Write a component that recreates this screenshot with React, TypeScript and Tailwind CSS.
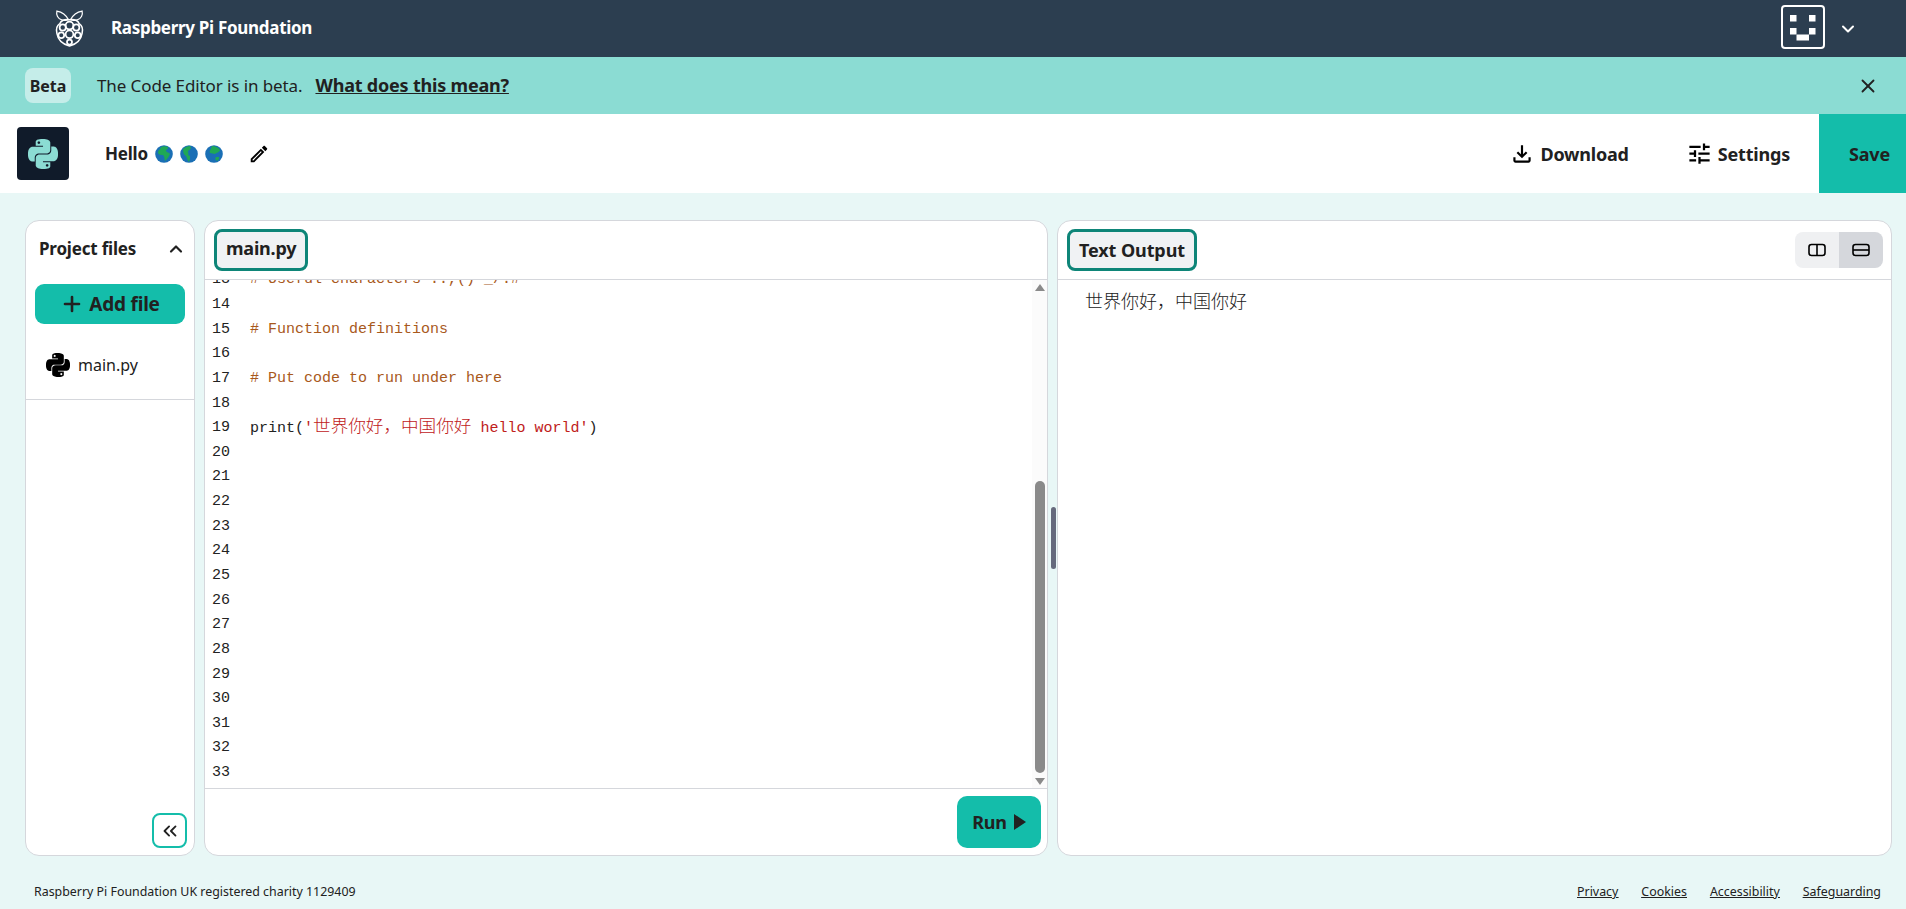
import { ChevronDown, ChevronUp, ChevronsLeft, Plus, X } from "lucide-react";
import { SiPython } from "react-icons/si";

function RaspberryLogo() {
  return (
    <svg viewBox="0 0 32 40" className="w-[31px] h-[39px]" fill="none" stroke="white" strokeWidth="1.3">
      {/* leaves */}
      <path d="M15 11C13 7 9 3 3 2c-1 4 1 8 5 9 3 1 5 1 7 0z" />
      <path d="M17 11c2-4 6-8 12-9 1 4-1 8-5 9-3 1-5 1-7 0z" />
      {/* berry */}
      <path d="M16 11c5-1 9 1 10 4 3 2 4 6 3 10-1 6-5 11-13 13-8-2-12-7-13-13-1-4 0-8 3-10 1-3 5-5 10-4z" strokeWidth="1.6" />
      <circle cx="16" cy="17" r="4" strokeWidth="1.8" />
      <circle cx="9" cy="19" r="3.2" strokeWidth="1.8" />
      <circle cx="23" cy="19" r="3.2" strokeWidth="1.8" />
      <circle cx="16" cy="26" r="4" strokeWidth="1.8" />
      <circle cx="7.5" cy="27" r="3" strokeWidth="1.8" />
      <circle cx="24.5" cy="27" r="3" strokeWidth="1.8" />
      <circle cx="16" cy="34" r="2.6" strokeWidth="1.8" />
    </svg>
  );
}

function Avatar() {
  return (
    <svg viewBox="0 0 44 44" className="w-11 h-11 mb-[3px]">
      <rect x="1" y="1" width="42" height="42" rx="3" fill="none" stroke="white" strokeWidth="2" />
      <rect x="9" y="10" width="6.5" height="6.5" fill="white" />
      <rect x="28" y="10" width="6.5" height="6.5" fill="white" />
      <rect x="9" y="23" width="6.5" height="6.5" fill="white" />
      <rect x="28" y="23" width="6.5" height="6.5" fill="white" />
      <rect x="15.5" y="29.5" width="12.5" height="6" fill="white" />
    </svg>
  );
}

function Globe({ land }: { land: string }) {
  return (
    <svg viewBox="0 0 18 18" className="w-[18px] h-[18px]">
      <circle cx="9" cy="9" r="8.8" fill="#1a6fb5" />
      <path d={land} fill="#1fa855" />
    </svg>
  );
}

function PencilIcon() {
  return (
    <svg viewBox="0 0 24 24" className="w-[22px] h-[22px]" fill="black">
      <path d="M14.06 9.02l.92.92L5.92 19H5v-.92l9.06-9.06M17.66 3c-.25 0-.51.1-.7.29l-1.83 1.83 3.75 3.75 1.83-1.83c.39-.39.39-1.02 0-1.41l-2.34-2.34c-.2-.2-.45-.29-.71-.29zm-3.6 3.19L3 17.25V21h3.75L17.81 9.94l-3.75-3.75z" />
    </svg>
  );
}

function DownloadIcon() {
  return (
    <svg viewBox="0 0 24 24" className="w-[26px] h-[26px]" fill="black">
      <path d="M18 15v3H6v-3H4v3c0 1.1.9 2 2 2h12c1.1 0 2-.9 2-2v-3h-2zm-1-4l-1.41-1.41L13 12.17V4h-2v8.17L8.41 9.59 7 11l5 5 5-5z" />
    </svg>
  );
}

function TuneIcon() {
  return (
    <svg viewBox="0 0 24 24" className="w-[27px] h-[27px]" fill="black">
      <path d="M3 17v2h6v-2H3zM3 5v2h10V5H3zm10 16v-2h8v-2h-8v-2h-2v6h2zM7 9v2H3v2h4v2h2V9H7zm14 4v-2H11v2h10zm-6-4h2V7h4V5h-4V3h-2v6z" />
    </svg>
  );
}

const lineNumbers = Array.from({ length: 21 }, (_, i) => i + 13);

function CodeLine({ n }: { n: number }) {
  let code: React.ReactNode = null;
  if (n === 13) code = <span className="text-[#a8591c]"># Useful characters :.,()*_/.#</span>;
  if (n === 15) code = <span className="text-[#a8591c]"># Function definitions</span>;
  if (n === 17) code = <span className="text-[#a8591c]"># Put code to run under here</span>;
  if (n === 19)
    code = (
      <div className="-mt-[3px]">
        <span className="text-[#222]">print(</span>
        <span className="text-[#c0201a]">
          '<span className="font-['Noto_Sans_CJK_SC',sans-serif] text-[17.6px] font-light">世界你好，中国你好</span> hello world'
        </span>
        <span className="text-[#222]">)</span>
      </div>
    );
  return (
    <div className="flex h-[24.65px] items-center whitespace-pre">
      <div className="w-[38px] text-[#222]">{n}</div>
      <div>{code}</div>
    </div>
  );
}

export default function App() {
  return (
    <div className="h-screen flex flex-col bg-[#e8f7f6] text-[#212121] font-['Noto_Sans','Noto_Sans_CJK_SC',sans-serif] overflow-hidden">
      {/* Global nav */}
      <header className="h-[57px] shrink-0 bg-[#2c3e50] flex items-center text-white">
        <div className="ml-[54px] w-[57px]">
          <RaspberryLogo />
        </div>
        <span className="text-[17px] font-bold tracking-[-0.3px] pb-[2px]">Raspberry Pi Foundation</span>
        <div className="ml-auto flex items-center">
          <Avatar />
          <ChevronDown className="w-5 h-5 ml-[13px] mr-[48px]" strokeWidth={2.4} />
        </div>
      </header>

      {/* Beta banner */}
      <div className="h-[57px] shrink-0 bg-[#8bdcd3] flex items-center pl-[25px] pr-[27px]">
        <span className="w-[46px] h-[35px] rounded-lg bg-[#c5ede9] flex items-center justify-center text-[16px] font-bold">Beta</span>
        <span className="ml-[26px] text-[17px] tracking-[-0.1px]">The Code Editor is in beta.</span>
        <a className="ml-[13px] text-[18px] font-bold underline tracking-[-0.2px]" href="#">What does this mean?</a>
        <X className="ml-auto w-[22px] h-[22px]" strokeWidth={2} />
      </div>

      {/* Project bar */}
      <div className="h-[79px] shrink-0 bg-white flex items-center pl-[17px]">
        <div className="w-[52px] h-[53px] rounded bg-[#101b2a] flex items-center justify-center">
          <SiPython className="w-[30px] h-[30px] text-[#8bdcd3]" />
        </div>
        <div className="ml-[36px] pt-[1px] flex items-center gap-[7px] text-[17px] font-bold tracking-[-0.2px]">
          <span>Hello</span>
          <Globe land="M6 2c2-1 5-1 7 0 1 2-2 2-2 4 1 2 3 1 4 3-1 3-3 5-5 7-1-2 0-4-2-6-2 0-4 0-5-2 0-3 2-3 3-6z" />
          <Globe land="M3 4c2-2 5-3 7-3 2 2 0 4-2 5 0 2 1 3 0 4l2 1 0 3-1 3c-2-2-2-4-3-6-2-1-3-3-3-7z" />
          <Globe land="M7 1c3 0 6 1 8 4-1 3-3 2-5 4-2 0-3-1-5-1C4 6 6 4 7 1zm4 11l3 0 0 2-2 2-2-2z" />
        </div>
        <div className="ml-[25px]">
          <PencilIcon />
        </div>
        <div className="ml-auto flex items-center h-full text-[18px] font-bold tracking-[-0.2px]">
          <DownloadIcon />
          <span className="ml-[5px] pt-[1px]">Download</span>
          <div className="ml-[57px]">
            <TuneIcon />
          </div>
          <span className="ml-[5px] mr-[29px] pt-[1px]">Settings</span>
          <button className="w-[87px] h-full bg-[#14bdaa] pl-[30px] pt-[1px] text-left font-bold">Save</button>
        </div>
      </div>

      {/* Editor panels */}
      <main className="flex-1 min-h-0 flex gap-[9px] pl-[25px] pr-[14px] pt-[27px]">
        {/* Sidebar */}
        <aside className="relative w-[170px] shrink-0 bg-white rounded-[14px] border border-[#d5d7dc] flex flex-col">
          <div className="flex items-center justify-between h-[54px] pl-[13px] pr-[8px] pt-[2px]">
            <span className="text-[17px] font-bold tracking-[-0.2px]">Project files</span>
            <ChevronUp className="w-5 h-5" strokeWidth={2.6} />
          </div>
          <button className="mx-[9px] mt-[9px] h-[40px] rounded-[9px] bg-[#14bdaa] flex items-center justify-center gap-[5px] text-[19px] font-bold tracking-[-0.2px]">
            <Plus className="w-6 h-6" strokeWidth={2.6} />
            Add file
          </button>
          <div className="h-[76px] border-b border-[#d5d7dc] flex items-center pl-[20px] pt-[6px] gap-[8px] text-[16px]">
            <SiPython className="w-[24px] h-[24px] text-black" />
            <span>main.py</span>
          </div>
          <button className="absolute right-[7px] bottom-[7px] w-[35px] h-[35px] rounded-lg border-2 border-[#14bdaa] flex items-center justify-center">
            <ChevronsLeft className="w-[22px] h-[22px]" strokeWidth={2} />
          </button>
        </aside>

        {/* Code editor */}
        <section className="relative w-[844px] shrink-0 bg-white rounded-[14px] border border-[#d5d7dc] flex flex-col">
          <div className="h-[59px] shrink-0 border-b border-[#d5d7dc] flex items-center pl-[9px]">
            <div className="h-[42px] px-[9px] pb-[3px] rounded-lg border-[3px] border-[#0e8578] bg-[#f0f2f4] flex items-center text-[18px] font-bold tracking-[-0.2px]">main.py</div>
          </div>
          <div className="flex-1 min-h-0 flex overflow-hidden">
            <div className="flex-1 min-w-0 pl-[7px] -mt-[12.5px] font-['Liberation_Mono',monospace] text-[15px] leading-none">
              {lineNumbers.map((n) => (
                <CodeLine n={n} key={n} />
              ))}
            </div>
            {/* Scrollbar */}
            <div className="relative w-[15px] bg-[#fbfbfb] flex flex-col items-center">
              <div className="mt-[4px] w-0 h-0 border-x-[5px] border-x-transparent border-b-[7px] border-b-[#8a8a8a]"></div>
              <div className="mt-[190px] h-[292px] w-[10px] rounded-[5px] bg-[#8a8a8a]"></div>
              <div className="mt-[5px] w-0 h-0 border-x-[5px] border-x-transparent border-t-[7px] border-t-[#8a8a8a]"></div>
            </div>
          </div>
          <div className="h-[67px] shrink-0 border-t border-[#d5d7dc] flex items-center justify-end pr-[6px]">
            <button className="w-[84px] h-[52px] rounded-[10px] bg-[#14bdaa] flex items-center justify-center gap-[7px] text-[18px] font-bold tracking-[-0.2px]">
              Run
              <svg viewBox="0 0 12 16" className="w-3 h-4" fill="#212121">
                <path d="M0 0l12 8-12 8z" />
              </svg>
            </button>
          </div>
          {/* Drag handle */}
          <div className="absolute left-[846px] top-[286px] w-[5px] h-[62px] rounded-sm bg-[#666a7d]"></div>
        </section>

        {/* Output */}
        <section className="flex-1 min-w-0 bg-white rounded-[14px] border border-[#d5d7dc] flex flex-col">
          <div className="h-[59px] shrink-0 border-b border-[#d5d7dc] flex items-center pl-[9px] pr-[8px]">
            <div className="h-[42px] px-[9px] rounded-lg border-[3px] border-[#0e8578] bg-[#f0f2f4] flex items-center text-[18px] font-bold tracking-[-0.1px]">Text Output</div>
            <div className="ml-auto flex">
              <div className="w-11 h-9 rounded-l-lg bg-[#eff0f2] flex items-center justify-center">
                <svg viewBox="0 0 18 14" className="w-[18px] h-[14px]" fill="none" stroke="black" strokeWidth="1.6">
                  <rect x="1" y="1.5" width="16" height="11" rx="2.5" />
                  <path d="M9 1.5v11" />
                </svg>
              </div>
              <div className="w-11 h-9 rounded-r-lg bg-[#d5d7dc] flex items-center justify-center">
                <svg viewBox="0 0 18 14" className="w-[18px] h-[14px]" fill="none" stroke="black" strokeWidth="1.6">
                  <rect x="1" y="1.5" width="16" height="11" rx="2.5" />
                  <path d="M1 7h16" />
                </svg>
              </div>
            </div>
          </div>
          <div className="pl-[27px] pt-[7px] text-[18px] leading-[26px] font-['Noto_Sans_CJK_SC',sans-serif] font-light">世界你好，中国你好</div>
        </section>
      </main>

      {/* Footer */}
      <footer className="h-[53px] shrink-0 flex items-center pl-[34px] pr-[25px] text-[12.4px] pt-[20px]">
        <span>Raspberry Pi Foundation UK registered charity 1129409</span>
        <nav className="ml-auto flex gap-[23px] underline">
          <a href="#">Privacy</a>
          <a href="#">Cookies</a>
          <a href="#">Accessibility</a>
          <a href="#">Safeguarding</a>
        </nav>
      </footer>
    </div>
  );
}
